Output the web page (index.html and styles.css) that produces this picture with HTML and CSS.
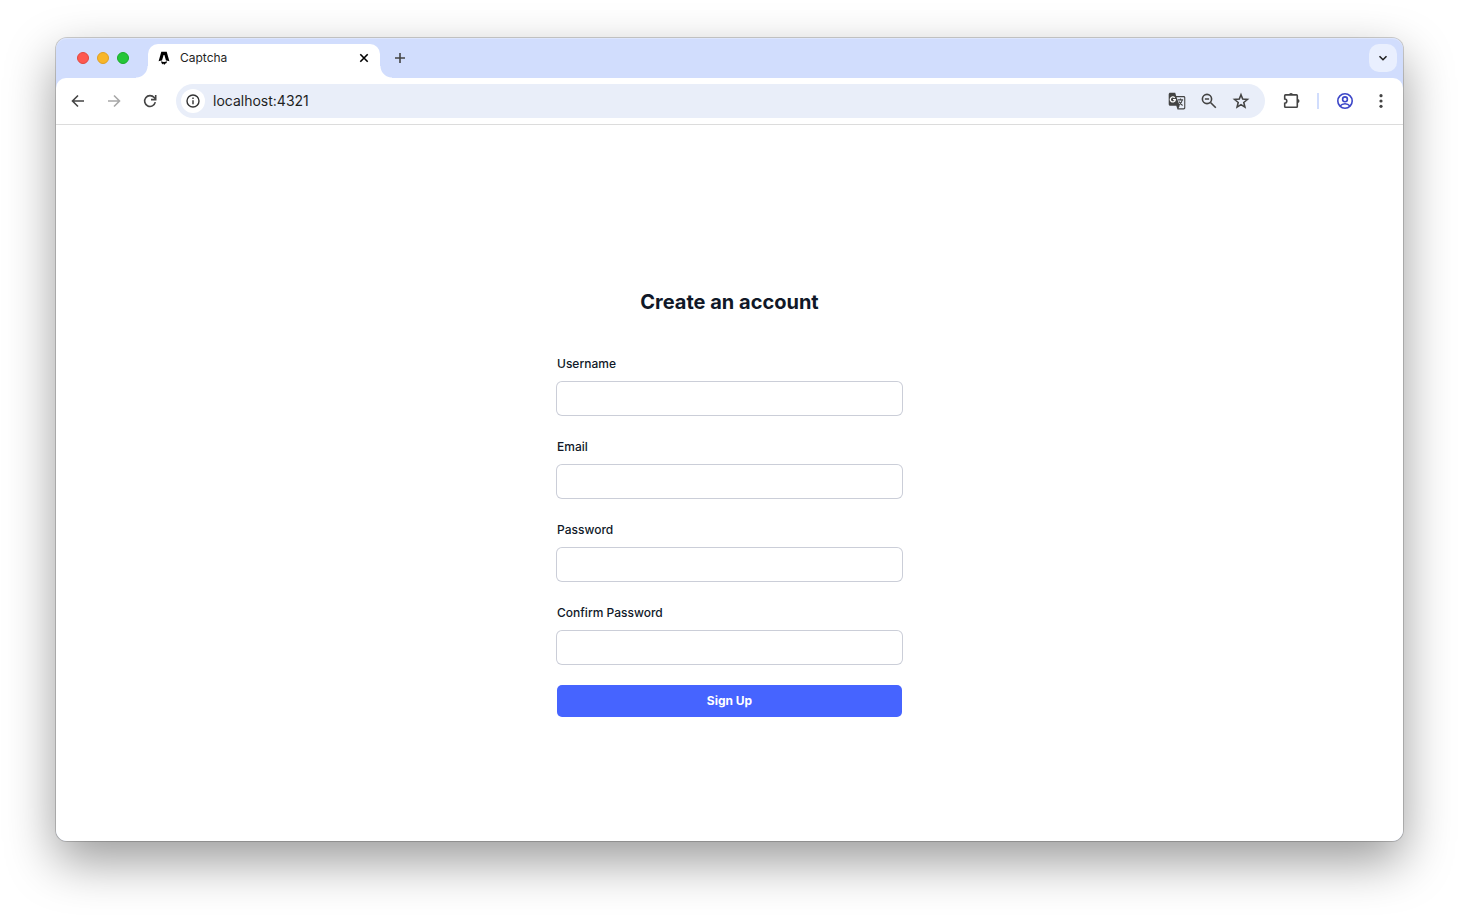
FILE: index.html
```html
<!DOCTYPE html>
<html lang="en">
<head>
<meta charset="utf-8">
<meta name="viewport" content="width=device-width, initial-scale=1">
<title>Captcha</title>
<link rel="stylesheet" href="styles.css">
</head>
<body>
<div class="window">
  <header class="tab-strip">
    <div class="lights">
      <span class="light light-close"></span>
      <span class="light light-minimize"></span>
      <span class="light light-zoom"></span>
    </div>
    <div class="tab">
      <svg class="favicon" viewBox="0 0 16 16" aria-hidden="true">
        <path d="M5.300 1.800h5.400L13.400 11.300c-1.200-.5-2.300-.8-3.400-.9L8.400 5h-.8L6 10.400c-1.100.1-2.200.4-3.400.9z"/>
        <path d="M5.200 11.200c1.700.9 3.900.9 5.600 0 .3 1.200-.3 1.900-1.200 2.400-.7.400-.9.700-.8 1.300-.8-.2-1.100-.7-1-1.300-.5.100-.6.400-.6.800-1.200-.5-2.200-1.700-2-3.200z"/>
      </svg>
      <span class="tab-title">Captcha</span>
      <button class="tab-close" type="button" aria-label="Close tab">
        <svg viewBox="0 0 16 16"><path d="M4.300 4.300l7.400 7.400M11.700 4.300l-7.400 7.400"/></svg>
      </button>
    </div>
    <button class="new-tab" type="button" aria-label="New tab">
      <svg viewBox="0 0 16 16"><path d="M8 3v10M3 8h10"/></svg>
    </button>
    <button class="tab-search" type="button" aria-label="Search tabs">
      <svg viewBox="0 0 16 16"><path d="M4.500 6.300L8 9.700l3.500-3.400"/></svg>
    </button>
  </header>

  <nav class="toolbar">
    <div class="history">
      <button class="tool" type="button" aria-label="Back">
        <svg viewBox="0 0 20 20"><path d="M16 10H4.800M10 4.500L4.500 10l5.500 5.500"/></svg>
      </button>
      <button class="tool tool-off" type="button" aria-label="Forward" disabled>
        <svg viewBox="0 0 20 20"><path d="M4 10h11.200M10 4.500l5.500 5.500-5.500 5.500"/></svg>
      </button>
      <button class="tool" type="button" aria-label="Reload">
        <svg viewBox="0 0 20 20"><path d="M15.300 11.200A5.400 5.400 0 1 1 14.200 6.600L15.400 8"/><path d="M15.700 4v4.600H11"/></svg>
      </button>
    </div>
    <div class="address">
      <button class="site-info" type="button" aria-label="View site information">
        <svg viewBox="0 0 16 16"><circle cx="8" cy="8" r="6"/><path d="M8 7.300v4M8 4.600v1.500"/></svg>
      </button>
      <input class="url" type="text" value="localhost:4321" aria-label="Address">
      <button class="tool" type="button" aria-label="Translate this page">
        <svg viewBox="0 0 20 20">
          <path class="solid" d="M3.200 1.800h5l1 3.200h7.500c.9 0 1.600.7 1.600 1.600v10.200c0 .9-.7 1.600-1.600 1.600h-6.200l-1.200-3.600H3.200c-.9 0-1.500-.7-1.500-1.500V3.300c0-.9.7-1.500 1.500-1.500z"/>
          <path class="cutout" d="M9.600 6.200h7c.3 0 .6.300.6.600v9.800c0 .3-.3.600-.6.600h-5.100l1.200-2.400z"/>
          <path class="g-mark" d="M7.700 6.800A2.500 2.500 0 1 0 8.300 8.600H6"/>
          <path class="thin" d="M10.900 8.900h5.200M13.500 7.500v1.400M15.300 9c-.4 2-1.600 3.500-3.100 4.700M12 10.500c.8 1.500 2 2.900 3.600 4"/>
        </svg>
      </button>
      <button class="tool" type="button" aria-label="Zoom">
        <svg viewBox="0 0 20 20"><circle cx="8" cy="8" r="4.600"/><path d="M11.500 11.500l5.300 5.300M5.900 8h4.200"/></svg>
      </button>
      <button class="tool" type="button" aria-label="Bookmark this tab">
        <svg viewBox="0 0 20 20"><path d="M10 3.800l1.700 4.300 4.700.4-3.600 3 1.100 4.600-3.900-2.500-3.900 2.500 1.100-4.600-3.600-3 4.700-.4z"/></svg>
      </button>
    </div>
    <div class="actions">
      <button class="tool" type="button" aria-label="Extensions">
        <svg viewBox="0 0 20 20"><path d="M3.500 3.900H14.500q.8 0 .8.800v10.800q0 .8-.8.800H3.500q-.8 0-.8-.8v-3.300a2.100 2.100 0 0 0 0-4.200V4.700q0-.8.800-.8z"/><path class="solid" d="M7 3.900a2 2 0 0 1 4 0zM15.500 8.100a2 2 0 0 1 0 4z"/></svg>
      </button>
      <span class="divider"></span>
      <button class="tool tool-profile" type="button" aria-label="Profile">
        <svg viewBox="0 0 20 20"><circle cx="10" cy="10" r="7.200"/><circle cx="10" cy="8.300" r="2.400"/><path d="M5 15c2.700-3 7.300-3 10 0"/></svg>
      </button>
      <button class="tool" type="button" aria-label="Menu">
        <svg viewBox="0 0 20 20"><g class="solid"><circle cx="10" cy="4.700" r="1.600"/><circle cx="10" cy="10" r="1.600"/><circle cx="10" cy="15.300" r="1.600"/></g></svg>
      </button>
    </div>
  </nav>

  <main class="page">
    <h1 class="title">Create an account</h1>
    <form class="form">
      <div class="field">
        <label class="label" for="username">Username</label>
        <input class="input" id="username" name="username" type="text">
      </div>
      <div class="field">
        <label class="label" for="email">Email</label>
        <input class="input" id="email" name="email" type="email">
      </div>
      <div class="field">
        <label class="label" for="password">Password</label>
        <input class="input" id="password" name="password" type="password">
      </div>
      <div class="field">
        <label class="label" for="confirm">Confirm Password</label>
        <input class="input" id="confirm" name="confirm" type="password">
      </div>
      <button class="submit" type="submit">Sign Up</button>
    </form>
  </main>
</div>
</body>
</html>
```
FILE: styles.css
```css
* {
  box-sizing: border-box;
}

body {
  display: flex;
  min-height: 100vh;
  margin: 0;
  padding: 38px 56px 74px;
  background: #fff;
  color: #101828;
  font-family: Inter, "Liberation Sans", sans-serif;
}

button {
  display: grid;
  flex: none;
  place-items: center;
  padding: 0;
  border: 0;
  background: none;
  font: inherit;
}

svg {
  display: block;
  fill: none;
  stroke: currentColor;
}

.window {
  display: flex;
  flex: 1;
  flex-direction: column;
  min-width: 0;
  border-radius: 11px;
  background: #d1ddfd;
  box-shadow: 0 0 0 1px rgba(0, 0, 0, 0.18), 0 20px 50px rgba(0, 0, 0, 0.4);
}

/* Tabs */
.tab-strip {
  display: flex;
  align-items: center;
  height: 40px;
  padding: 0 6px 0 21px;
  border-radius: 11px 11px 0 0;
  box-shadow: inset 0 1px 0 #dde6fe;
  color: #1f1f1f;
}

.lights {
  display: flex;
  gap: 8px;
}

.light {
  width: 12px;
  height: 12px;
  border: 1px solid #e1473f;
  border-radius: 50%;
  background: #fe5850;
}

.light-minimize {
  border-color: #dfa023;
  background: #f8b62a;
}

.light-zoom {
  border-color: #1aab29;
  background: #25c638;
}

.tab {
  position: relative;
  display: flex;
  align-items: center;
  align-self: flex-end;
  width: 232px;
  height: 34px;
  margin-left: 19px;
  padding: 0 8px 6px;
  border-radius: 10px 10px 0 0;
  background: #fff;
}

/* Flared feet where the tab meets the toolbar */
.tab::before,
.tab::after {
  position: absolute;
  bottom: 0;
  width: 12px;
  height: 12px;
  content: "";
}

.tab::before {
  right: 100%;
  background: radial-gradient(circle at 0 0, transparent 11px, #fff 12px);
}

.tab::after {
  left: 100%;
  background: radial-gradient(circle at 100% 0, transparent 11px, #fff 12px);
}

.favicon {
  width: 16px;
  height: 16px;
  fill: #000;
  stroke: none;
}

.tab-title {
  flex: 1;
  margin-left: 8px;
  font-size: 12px;
  line-height: 16px;
}

.tab-close svg,
.new-tab svg,
.tab-search svg {
  width: 16px;
  height: 16px;
  stroke-width: 1.6;
}

.new-tab {
  width: 28px;
  height: 28px;
  margin-left: 6px;
  color: #444;
}

.tab-search {
  width: 28px;
  height: 28px;
  margin-left: auto;
  border-radius: 10px;
  background: #e9effe;
  color: #1f1f1f;
}

/* Toolbar */
.toolbar {
  display: flex;
  align-items: center;
  height: 47px;
  padding: 0 12px;
  border-bottom: 1px solid #dcdcdc;
  border-radius: 10px 10px 0 0;
  background: #fff;
}

.history {
  display: flex;
  gap: 16px;
}

.tool {
  width: 20px;
  height: 20px;
  color: #444;
}

.tool svg {
  width: 20px;
  height: 20px;
  stroke-width: 1.6;
}

.tool-off {
  color: #a8a8a8;
}

.tool-profile {
  margin-right: 16px;
  color: #3c46c8;
}

.solid {
  fill: currentColor;
  stroke: none;
}

.cutout {
  fill: #e9eef9;
  stroke: none;
}

.g-mark {
  stroke: #fff;
  stroke-width: 1.3;
}

.thin {
  stroke-width: 1.1;
}

.address {
  display: flex;
  flex: 1;
  align-items: center;
  gap: 12px;
  height: 34px;
  margin-left: 16px;
  padding: 0 14px 0 5px;
  border-radius: 17px;
  background: #e9eef9;
}

.site-info {
  width: 24px;
  height: 24px;
  border-radius: 50%;
  background: #fff;
  color: #333;
}

.site-info svg {
  width: 16px;
  height: 16px;
  stroke-width: 1.4;
}

.url {
  flex: 1;
  min-width: 0;
  margin-left: -4px;
  padding: 0;
  border: 0;
  outline: 0;
  background: none;
  color: #1f1f1f;
  font: inherit;
  font-size: 14px;
  line-height: 20px;
}

.actions {
  display: flex;
  align-items: center;
  margin-left: 17px;
}

.divider {
  width: 2px;
  height: 16px;
  margin: 0 16px 0 15px;
  background: #d1ddfd;
}

/* Sign-up page */
.page {
  display: flex;
  flex: 1;
  flex-direction: column;
  align-items: center;
  padding: 161px 24px 48px;
  border-radius: 0 0 11px 11px;
  background: #fff;
}

.title {
  margin: 0 0 35px;
  font-size: 20px;
  font-weight: 700;
  line-height: 32px;
}

.form {
  display: flex;
  flex-direction: column;
  gap: 21px;
  width: 100%;
  max-width: 345px;
}

.field {
  display: flex;
  flex-direction: column;
  gap: 7px;
}

.label {
  font-size: 12px;
  font-weight: 500;
  line-height: 22px;
}

.input {
  width: 100%;
  height: 33px;
  padding: 0 10px;
  border: 0;
  border-radius: 5px;
  background: #fff;
  box-shadow: 0 0 0 1px #cbced8;
  font: inherit;
  font-size: 12px;
}

.submit {
  height: 32px;
  border-radius: 5px;
  background: #4664ff;
  color: #fff;
  font-size: 12px;
  font-weight: 700;
  line-height: 20px;
}
```
